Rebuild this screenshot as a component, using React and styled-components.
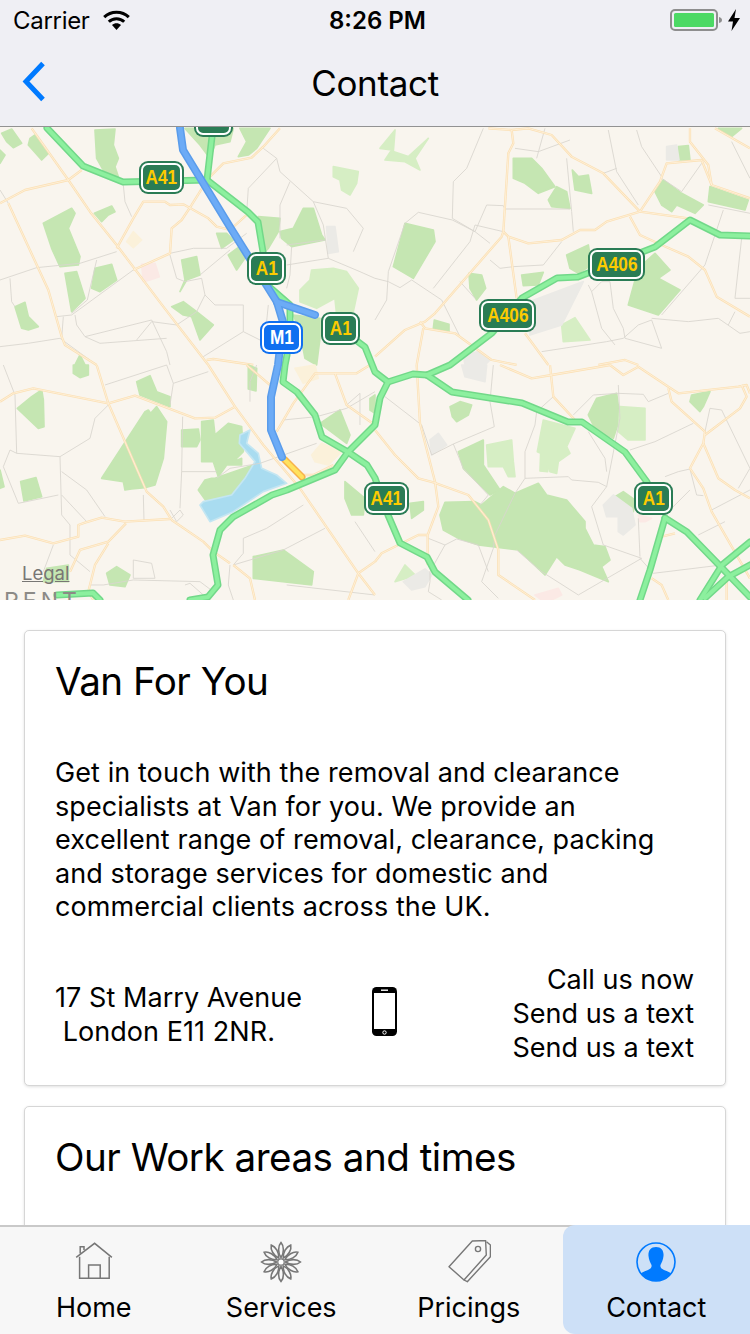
import React from 'react'
import styled, { createGlobalStyle } from 'styled-components'

// map data is written in the 3x coordinates of each quarter of the map
const QUARTERS = [
  {
    at: 'translate(0 125) scale(0.3333)',
    parks: [
      '285,15 345,12 340,60 355,100 345,125 355,155 310,135 290,100',
      '5,25 35,12 65,55 40,68 20,50',
      '90,40 105,30 145,85 125,105 85,60',
      '0,75 15,90 0,115',
      '130,295 215,250 225,265 205,310 240,395 235,420 180,425 155,370',
      '195,445 230,440 255,520 215,560',
      '275,490 285,430 335,418 350,465 300,500',
      '283,265 335,243 345,260 325,270 305,290',
      '45,545 75,532 85,575 115,605 85,615 65,610',
      '225,720 240,690 255,720',
      '545,405 590,395 600,450 560,465 540,500 555,465',
      '650,325 680,325 700,345 665,370',
      '685,390 725,360 745,385 710,435',
      '515,545 550,530 590,560 640,600 600,645 575,575 550,570',
      '555,10 700,10 690,50 645,60 630,100 600,60',
      '720,10 810,10 770,70 745,90 715,95 740,50',
      '775,275 840,280 835,320 805,370 790,385 775,330',
      '840,320 880,310 910,250 940,250 965,330 975,345 875,365 845,340',
      '880,570 960,580 960,640 950,720 915,700 900,620',
    ],
    light: [
      '1000,125 1075,140 1070,175 1050,210 1025,195 1020,165 1000,155',
      '900,495 930,465 935,435 1000,430 1040,440 1075,490 1060,560 1010,570 1005,520 950,550 900,530',
    ],
    grey: ['980,305 1005,305 1015,380 985,385'],
    pink: ['425,418 465,415 478,455 450,465 430,470'],
    beige: ['380,350 400,320 425,345 400,368'],
    lines: [
      '370,180 375,230 395,275',
      '0,465 110,428 240,415 350,380',
      '30,460 35,530 45,545',
      '0,195 25,235',
      '740,265 745,190 830,100 790,70',
      '830,100 840,140 940,230 1040,250 1090,310 1060,380',
      '870,170 840,240 840,340',
      '940,230 970,300 985,400 1080,440 1125,460',
      '860,360 975,345',
      '875,365 870,450 860,490',
      '860,420 985,400',
      '170,575 215,570 400,435 510,385 580,370 680,370 740,325',
      '510,390 530,460 555,470 605,460 615,510 590,560 530,600 455,590 410,645',
      '190,575 185,640',
      '225,570 230,600 255,635 455,585 500,680 510,720',
      '615,510 645,540 730,540 730,620',
      '730,620 610,695',
      '730,620 810,660',
      '805,540 800,590',
      '0,665 85,655 180,640 290,720',
      '300,655 500,640',
      '255,635 300,655',
      '290,405 270,490 262,525 215,565',
      '690,375 600,450',
    ],
    roads: [
      '95,10 205,165 270,260 350,360 490,545 625,720',
      '0,235 75,195 205,165 245,135',
      '25,235 145,495 185,635 195,660 290,720',
      '625,160 670,115 755,98 790,65 840,10',
      '625,160 575,240 545,285 515,310 510,385 400,435',
      '350,370 400,280 430,230 495,230 510,240 550,238 625,280 650,305 690,315 745,265',
      '620,705 640,702 760,720',
    ],
  },
  {
    at: 'translate(375 125) scale(0.3333)',
    parks: [
      '415,100 470,100 500,130 540,185 490,205 450,175 415,160',
      '520,225 545,185 575,200 585,250 530,245',
      '592,135 610,155 640,150 650,205 600,195',
      '90,295 175,315 180,350 115,460 55,425',
      '282,445 320,450 332,490 305,525 285,490',
      '440,450 505,442 490,480 445,482',
      '575,390 640,360 650,420 610,445 585,430',
      '790,430 840,385 885,435 850,460 915,495 850,570 760,540',
      '840,200 865,165 920,205 985,240 960,265 905,240 890,260 860,240',
      '1005,185 1120,225 1110,255 1000,230',
      '178,585 222,598 222,620 175,610',
      '1030,10 1100,10 1070,35',
      '910,65 940,62 945,105 912,105',
    ],
    light: [
      '15,70 60,15 55,80 100,95 160,40 120,100 135,135 90,110 30,105 50,75',
      '560,600 600,578 645,645 565,650',
    ],
    grey: [
      '465,530 625,470 560,600 465,630',
      '875,65 905,60 912,105 875,105',
      '265,690 310,680 345,705 330,720 270,720',
    ],
    pink: [],
    beige: [],
    lines: [
      '325,10 275,130 235,170 232,280 300,320',
      '130,262 232,285 300,320 345,355',
      '130,262 90,295 40,440 35,525 0,585',
      '0,460 40,470 75,488 110,465 200,525 255,635',
      '300,300 385,320',
      '300,300 285,350 175,490',
      '335,240 385,242 390,252 585,252',
      '335,240 300,320',
      '345,405 375,430 415,425 505,420 560,350',
      '510,10 485,100',
      '420,70 490,80 585,45',
      '575,100 590,260 595,320',
      '640,480 650,500 680,470 705,470 715,550 745,610 750,640 860,670 830,585 790,600 745,640 695,650 500,680',
      '650,500 680,610 720,660',
      '700,15 725,140 790,240',
      '685,145 725,130',
      '785,15 800,65 860,155',
      '860,160 920,200 980,115',
      '1045,255 990,420 860,570',
      '830,580 940,590 1030,580 1095,625 1125,620',
      '1000,240 1125,265',
      '1100,340 1080,520 1125,520',
      '1080,560 1060,600',
      '1070,50 1125,160',
      '255,470 300,520',
    ],
    roads: [
      '340,10 410,15 460,10 530,30 590,95 685,145 795,260 855,170 875,115 980,105 1010,180 1125,220',
      '410,15 415,55 400,85 385,320 380,335 180,565 150,590 90,615 0,695',
      '385,320 400,335 460,355 560,345 615,315 660,315 695,290 795,260 940,280',
      '400,335 425,520',
      '945,10 945,50 1000,120 1010,180',
      '1020,10 1125,70',
      '765,275 795,330 860,360 940,395 990,435 1025,515 1125,575',
      '135,590 150,610 240,625 350,705 425,720',
      '145,610 125,720',
      '450,625 520,720',
      '670,720 750,705 790,720',
    ],
  },
  {
    at: 'translate(0 365) scale(0.3333)',
    parks: [
      '220,0 265,0 265,30 240,38 220,25',
      '410,50 450,32 470,80 510,95 510,125 420,90',
      '52,130 95,95 125,75 130,105 132,185 115,190',
      '305,340 435,140 445,135 452,145 470,125 500,170 490,280 465,360 435,368 395,372 375,375 370,350',
      '62,350 108,338 125,395 72,408',
      '545,195 595,192 600,225 590,245 545,245',
      '605,170 640,165 645,210 685,175 725,185 730,260 700,290 725,280 725,300 680,300 655,335 640,290 605,290',
      '595,375 615,345 635,340 645,340 760,300 720,355 690,395 620,410',
      '760,575 850,555 940,620 935,660 760,640',
      '745,0 770,10 768,78 745,72',
      '0,315 12,365 0,370',
      '1035,350 1095,400 1090,450 1055,450 1035,400',
      '960,175 1020,135 1050,210 1040,235',
      '1110,100 1125,90 1125,145 1110,135',
      '320,625 350,605 390,630 375,665 330,660',
      '140,610 205,600 205,650 130,650',
    ],
    light: [],
    grey: [],
    pink: [],
    beige: [
      '885,10 945,0 955,40 910,55',
      '935,270 965,235 1025,260 985,300 945,290',
    ],
    water: [
      '600,420 630,470 700,440 790,380 860,355 830,330 785,310 775,265 740,235 750,195 720,210 718,235 765,290 735,340 695,390 610,410',
    ],
    lines: [
      '10,0 45,90 50,265 180,275 270,220 285,160 325,120',
      '315,60 500,0',
      '500,0 520,55 510,120',
      '520,55 625,20',
      '180,275 185,450 210,480 210,570 270,620',
      '30,255 10,305 55,415 175,390',
      '30,255 50,265',
      '185,320 260,375 315,455',
      '185,390 260,470',
      '548,155 545,320 540,430',
      '545,320 650,320',
      '430,390 432,465',
      '160,540 130,620',
      '650,340 690,310 780,295 950,235',
      '750,110 750,50 770,0',
      '850,165 950,155 1040,130 1125,80',
      '1040,120 1080,85 1080,180',
      '700,600 730,565 730,520 800,490 910,420',
      '700,600 850,555 975,490',
      '860,660 1125,690',
      '400,585 455,595 465,640 400,640 400,585',
      '270,660 310,660 400,645 600,650 640,680',
      '555,660 570,655 610,690',
      '690,600 685,660 700,705',
      '1065,470 1125,560',
      '510,435 530,470 550,450 540,435 510,465',
    ],
    roads: [
      '0,110 40,85 100,70 325,115 405,92 585,160 645,158 705,125',
      '290,0 325,115 440,380 490,425 515,465 610,530 640,560 690,595',
      '0,525 75,512 160,535 235,515 235,480 255,473 305,458 375,470 510,462',
      '378,475 325,530 240,555 210,620',
      '325,535 285,600 265,680 280,705',
      '625,0 705,125 790,240 900,370 1075,625 1125,690',
      '700,600 750,640 765,705',
      '1075,625 1125,590',
      '1075,625 1045,705',
      '830,200 880,115 945,25 1005,25 1070,25 1110,0',
      '1005,25 1040,120 1125,180',
      '740,0 810,60',
      '905,330 940,330 1000,300',
    ],
  },
  {
    at: 'translate(375 365) scale(0.3333)',
    parks: [
      '225,125 255,110 290,120 280,150 245,170 232,155',
      '250,260 325,225 325,300 375,375 345,390 265,310',
      '640,150 665,100 725,85 735,160 715,220 660,190',
      '195,450 210,412 300,410 320,420 385,365 420,385 490,355 515,390 575,405 630,470 630,490 655,540 690,545 705,585 680,605 700,650 615,615 570,600 545,575 510,630 430,555 310,540 250,520 205,495',
      '105,415 145,410 145,435 110,460',
      '720,395 745,380 780,405 775,440 745,435',
      '950,90 975,85 1005,80 985,125 975,140 945,110',
    ],
    light: [
      '335,240 410,225 415,290 420,335 400,335 385,305 340,305',
      '505,165 600,190 575,245 585,265 550,290 545,325 525,320 515,290 518,320 495,318 497,265 487,260',
      '735,125 810,130 810,225 760,225 730,200',
      '60,650 90,600 125,635 95,640',
    ],
    grey: [
      '165,225 190,205 215,240 170,270',
      '685,420 715,390 770,430 780,480 745,510 730,500 730,455 695,455',
      '85,650 150,612 170,630 150,665 110,675',
      '260,0 335,0 330,50 270,35',
    ],
    pink: [
      '790,450 830,460 810,470 795,470',
      '480,690 550,670 560,690 530,705 500,705',
    ],
    beige: [],
    lines: [
      '355,0 345,110 358,185 235,237 170,270 140,180 30,95',
      '535,95 485,140 480,180 450,260 450,340 420,385 360,510 355,550 320,650 370,700',
      '450,340 580,335 590,345 670,352 695,365',
      '695,320 690,280 640,200',
      '730,60 735,160 695,365 650,425 685,540 800,580',
      '655,90 730,85 805,88 820,110 880,85',
      '655,90 595,150',
      '765,255 840,230 955,175',
      '800,580 610,690 500,620 425,555',
      '235,237 265,310 340,390 315,420',
      '160,520 210,540 245,522 310,540 340,620',
      '210,540 165,620 165,650 160,680 200,705',
      '835,625 1040,600',
      '795,580 835,625',
      '1005,130 1040,135 1125,310 1090,370',
      '1005,130 990,200',
      '870,335 910,320 945,312 965,390 985,392',
      '945,375 870,450',
      '790,460 795,575',
      '1010,435 1125,375',
      '970,510 1050,470',
    ],
    roads: [
      '125,0 135,175 180,350 190,425 158,510 158,600',
      '0,195 60,270 130,340 175,352 280,390 340,465 370,555 370,630 480,705',
      '0,590 20,565 130,510 158,510',
      '375,0 470,40 530,30 705,0',
      '525,0 535,95 600,165',
      '705,0 745,30 790,5 880,65 910,85 1090,65 1115,60 1125,85',
      '880,70 890,110 990,200 985,235 945,310 985,370 1010,440 1125,640',
      '990,210 1095,130 1115,95 1100,60',
      '985,235 1030,340 1080,375 1125,400',
      '860,515 900,505',
      '830,640 860,660 880,705',
      '1055,650 1055,705',
    ],
  },
]

// these are in page pixels
const MOTORWAYS = [
  '47,128 83,166 123,182 207,180 213,128',
  '207,180 248,212 258,222 263,252 267,285 290,305 290,322 287,355 285,365 283,382 297,392 315,415 322,437 348,452 367,465 375,478 388,515 400,543 427,557 435,572 468,600',
  '348,452 375,425 380,398 388,382 413,374 427,375 452,392 522,403 568,422 582,422 625,452 647,482',
  '341,329 365,347 375,372 388,382',
  '427,375 450,365 492,333 522,298 557,278 578,277 655,247 690,220 720,235 750,236',
  '665,518 650,570 640,600',
  '665,518 687,532 722,568 750,597',
  '750,542 722,565 700,600',
  '750,565 728,577 705,598',
  '348,452 335,470 287,490 272,495 233,517 220,530 213,555 218,585 208,597 190,600',
  '57,595 93,593 100,600',
]

const ROUTE = [
  '180,128 183,150 230,227 277,302 283,322 278,365 271,397 271,430 282,457',
  '277,302 315,315',
]

const SHIELDS = [
  { label: '', x: 194, y: 104, w: 39 },
  { label: 'A41', x: 139, y: 161, w: 45 },
  { label: 'A1', x: 247, y: 252, w: 39 },
  { label: 'M1', x: 260, y: 321, w: 43, motorway: true },
  { label: 'A1', x: 321, y: 312, w: 39 },
  { label: 'A406', x: 588, y: 248, w: 57 },
  { label: 'A406', x: 479, y: 299, w: 57 },
  { label: 'A41', x: 364, y: 482, w: 45 },
  { label: 'A1', x: 634, y: 482, w: 39 },
]

const Global = createGlobalStyle`
  html, body {
    margin: 0;
    padding: 0;
    background: #fff;
  }
  * {
    box-sizing: border-box;
  }
`

const Page = styled.div`
  width: 750px;
  height: 1334px;
  display: flex;
  flex-direction: column;
  overflow: hidden;
  font-family: Inter, 'Liberation Sans', sans-serif;
  color: #000;
`

const Header = styled.header`
  height: 127px;
  flex: none;
  display: flex;
  flex-direction: column;
  background: #efeff4;
  border-bottom: 1px solid #929292;
`

const StatusBar = styled.div`
  height: 40px;
  padding: 0 10px 0 13px;
  display: flex;
  align-items: center;
  justify-content: space-between;
  position: relative;
`

const StatusGroup = styled.div`
  display: flex;
  align-items: center;
  gap: ${p => p.$gap}px;
`

const Carrier = styled.span`
  font-size: 24px;
  letter-spacing: -0.3px;
`

const Clock = styled.span`
  position: absolute;
  left: 329px;
  font-size: 24px;
  font-weight: 600;
  letter-spacing: 0;
`

const NavBar = styled.div`
  flex: 1;
  position: relative;
  display: flex;
  align-items: center;
  justify-content: center;
  padding-bottom: 1px;
`

const BackButton = styled.svg`
  position: absolute;
  left: 21px;
  top: 21px;
  width: 25px;
  height: 41px;
`

const Title = styled.h1`
  margin: 0;
  font-size: 35px;
  font-weight: 400;
  letter-spacing: -0.35px;
`

const MapBox = styled.div`
  height: 473px;
  flex: none;
  position: relative;
  overflow: hidden;
  background: #f9f5ee;
`

const MapDrawing = styled.svg`
  display: block;
  width: 750px;
  height: 473px;
`

const Area = styled.polygon`
  fill: ${p => p.$fill};
  stroke: ${p => p.$edge || p.$fill};
  stroke-width: 5;
  stroke-linejoin: round;
`

const Boundary = styled.polyline`
  fill: none;
  stroke: #d9d5ce;
  stroke-width: 2.6;
  stroke-linejoin: round;
`

const RoadEdge = styled.polyline`
  fill: none;
  stroke: #fbe0b4;
  stroke-width: 7;
  stroke-linejoin: round;
`

const RoadCore = styled.polyline`
  fill: none;
  stroke: #fff3df;
  stroke-width: 2.4;
  stroke-linejoin: round;
`

const Stroke = styled.polyline`
  fill: none;
  stroke: ${p => p.$color};
  stroke-width: ${p => p.$width};
  stroke-linejoin: round;
  stroke-linecap: round;
`

const Shield = styled.div`
  position: absolute;
  left: ${p => p.$x}px;
  top: ${p => p.$y - 127}px;
  width: ${p => p.$w}px;
  height: 33px;
  display: flex;
  align-items: center;
  justify-content: center;
  border-radius: 9px;
  background: ${p => (p.$motorway ? '#0f6ff0' : '#2a7c55')};
  color: ${p => (p.$motorway ? '#fff' : '#fdcb00')};
  font-family: 'Liberation Sans', Arial, sans-serif;
  font-size: 20px;
  font-weight: 700;

  &::after {
    content: '';
    position: absolute;
    inset: 2px;
    border: 2px solid #fff;
    border-radius: 7px;
  }
`

const ShieldLabel = styled.span`
  display: block;
  transform: scaleX(0.86);
`

const Legal = styled.span`
  position: absolute;
  left: 22px;
  top: 435px;
  font-size: 18.5px;
  color: #787674;
  text-decoration: underline;
`

const PlaceName = styled.span`
  position: absolute;
  left: 4px;
  top: 460px;
  font-size: 23px;
  letter-spacing: 4px;
  color: #8c8a86;
`

const Content = styled.main`
  flex: 1;
  min-height: 0;
  overflow: hidden;
  padding: 30px 24px 0;
  display: flex;
  flex-direction: column;
  gap: 20px;
`

const Card = styled.section`
  flex: none;
  min-height: ${p => p.$minHeight || 0}px;
  padding: 26px 31px 20px 30px;
  background: #fff;
  border: 1px solid #d6d6d6;
  border-radius: 5px;
  box-shadow: 0 1px 3px rgba(0, 0, 0, 0.12);
`

const CardTitle = styled.h2`
  margin: 0;
  font-size: 38.6px;
  line-height: 48px;
  font-weight: 400;
  letter-spacing: -0.5px;
`

const Description = styled.p`
  margin: 51px 0 39px;
  font-size: 27px;
  line-height: 33.5px;
  letter-spacing: 0.08px;
`

const ContactRow = styled.div`
  display: grid;
  grid-template-columns: 316px 25px 1fr;
  align-items: center;
  font-size: 27px;
  line-height: 34px;
`

const Address = styled.div`
  white-space: pre;
  margin-top: 3px;
  letter-spacing: 0.06px;
`

const PhoneIcon = styled.svg`
  display: block;
  margin-bottom: 5px;
  margin-left: 1px;
`

const Actions = styled.div`
  text-align: right;
`

const TabBar = styled.nav`
  height: 109px;
  flex: none;
  display: grid;
  grid-template-columns: repeat(4, 1fr);
  background: #f7f7f7;
  border-top: 2px solid #c9c9c9;
`

const Tab = styled.div`
  display: flex;
  flex-direction: column;
  align-items: center;
  margin-top: ${p => (p.$active ? -2 : 0)}px;
  padding-top: ${p => (p.$active ? 2 : 0)}px;
  background: ${p => (p.$active ? '#cde0f7' : 'transparent')};
  border-radius: ${p => (p.$active ? '12px 0 0 12px' : 0)};
  font-size: 27px;
`

const TabIcon = styled.svg`
  width: 44px;
  height: 44px;
  margin-top: 13px;
  flex: none;
`

const TabLabel = styled.span`
  margin-top: 7px;
  line-height: 34px;
`

const TinyIcon = styled.svg`
  display: block;
  flex: none;
`

function MapLayer() {
  return (
    <MapDrawing viewBox="0 127 750 473">
      {QUARTERS.map(q => (
        <g key={q.at} transform={q.at}>
          {q.parks.map(p => <Area key={p} points={p} $fill="#c5e6b2" />)}
          {q.light.map(p => <Area key={p} points={p} $fill="#d6eec4" />)}
          {q.grey.map(p => <Area key={p} points={p} $fill="#ebeae6" />)}
          {q.pink.map(p => <Area key={p} points={p} $fill="#fbe9e5" />)}
          {q.beige.map(p => <Area key={p} points={p} $fill="#fbf1da" />)}
          {(q.water || []).map(p => <Area key={p} points={p} $fill="#a9dcf0" $edge="#c4e6f2" />)}
          {q.lines.map(p => <Boundary key={p} points={p} />)}
          {q.roads.map(p => <RoadEdge key={p} points={p} />)}
          {q.roads.map(p => <RoadCore key={p} points={p} />)}
        </g>
      ))}
      <Stroke points="285,460 302,477" $color="#f7b24a" $width={7} />
      <Stroke points="285,460 302,477" $color="#ffe25e" $width={4} />
      {MOTORWAYS.map(p => <Stroke key={p} points={p} $color="#72d889" $width={7} />)}
      {MOTORWAYS.map(p => <Stroke key={p} points={p} $color="#8cf09e" $width={4} />)}
      {ROUTE.map(p => <Stroke key={p} points={p} $color="#5a9ceb" $width={8} />)}
      {ROUTE.map(p => <Stroke key={p} points={p} $color="#6cabf6" $width={5} />)}
    </MapDrawing>
  )
}

function Flower() {
  const angles = Array.from({ length: 12 }, (_, i) => i * 30)
  return (
    <TabIcon viewBox="0 0 44 44">
      {angles.map(a => (
        <path
          key={a}
          transform={`rotate(${a} 22 22)`}
          d="M22 17.5 C18.8 13 18.8 6 22 2.5 C25.2 6 25.2 13 22 17.5 Z"
          fill="#f7f7f7"
          stroke="#777"
          strokeWidth="1.6"
        />
      ))}
      <circle cx="22" cy="22" r="3.2" fill="#fff" stroke="#777" strokeWidth="1.2" />
    </TabIcon>
  )
}

export default function App() {
  return (
    <Page>
      <Global />
      <Header>
        <StatusBar>
          <StatusGroup $gap={12}>
            <Carrier>Carrier</Carrier>
            <TinyIcon width="29" height="20" viewBox="0 0 29 20">
              <path d="M14.5 20 L10 15 C12.5 12.6 16.5 12.6 19 15 Z" fill="#000" />
              <path d="M6.8 11.8 C11 7.6 18 7.6 22.2 11.8" fill="none" stroke="#000" strokeWidth="3" />
              <path d="M2.2 7.2 C9 0.6 20 0.6 26.8 7.2" fill="none" stroke="#000" strokeWidth="3" />
            </TinyIcon>
          </StatusGroup>
          <Clock>8:26 PM</Clock>
          <StatusGroup $gap={5}>
            <TinyIcon width="53" height="22" viewBox="0 0 53 22">
              <rect x="1" y="1" width="46" height="20" rx="4" fill="none" stroke="#8e8e8e" strokeWidth="2" />
              <rect x="4" y="4" width="40" height="14" rx="1.5" fill="#4cd964" />
              <path d="M49 8 C51 8.5 52 9.5 52 11 C52 12.5 51 13.5 49 14 Z" fill="#8e8e8e" />
            </TinyIcon>
            <TinyIcon width="12" height="22" viewBox="0 0 12 22">
              <path d="M8 0 L0 12.5 H5 L3.5 22 L12 9 H6.5 Z" fill="#000" />
            </TinyIcon>
          </StatusGroup>
        </StatusBar>
        <NavBar>
          <BackButton viewBox="0 0 25 41">
            <path d="M22 2.5 L5 20.5 L22 38.5" fill="none" stroke="#007aff" strokeWidth="5" />
          </BackButton>
          <Title>Contact</Title>
        </NavBar>
      </Header>

      <MapBox>
        <MapLayer />
        {SHIELDS.map(s => (
          <Shield key={s.label + s.x} $x={s.x} $y={s.y} $w={s.w} $motorway={s.motorway}>
            {s.label && <ShieldLabel>{s.label}</ShieldLabel>}
          </Shield>
        ))}
        <Legal>Legal</Legal>
        <PlaceName>RENT</PlaceName>
      </MapBox>

      <Content>
        <Card>
          <CardTitle>Van For You</CardTitle>
          <Description>
            Get in touch with the removal and clearance<br />
            specialists at Van for you. We provide an<br />
            excellent range of removal, clearance, packing<br />
            and storage services for domestic and<br />
            commercial clients across the UK.
          </Description>
          <ContactRow>
            <Address>{'17 St Marry Avenue\n London E11 2NR.'}</Address>
            <PhoneIcon width="25" height="49" viewBox="0 0 25 49">
              <rect x="0" y="0" width="25" height="49" rx="4.5" fill="#000" />
              <rect x="2" y="6" width="21" height="36" fill="#fff" />
              <rect x="9" y="2.5" width="7" height="1.4" fill="#fff" />
              <circle cx="12.5" cy="45.5" r="1.7" fill="none" stroke="#fff" strokeWidth="1" />
            </PhoneIcon>
            <Actions>
              Call us now<br />
              Send us a text<br />
              Send us a text
            </Actions>
          </ContactRow>
        </Card>
        <Card $minHeight={200}>
          <CardTitle>Our Work areas and times</CardTitle>
        </Card>
      </Content>

      <TabBar>
        <Tab>
          <TabIcon viewBox="0 0 44 44">
            <g fill="none" stroke="#777" strokeWidth="1.5">
              <path d="M4.2 17.3 L22.6 3.3 L39.9 17.3" />
              <path d="M8.2 13.5 V6.7 H12 V10" />
              <path d="M7.6 16.7 V38.3 H37.2 V16.7" />
              <path d="M16.6 38.3 V25 H28.2 V38.3" />
            </g>
          </TabIcon>
          <TabLabel>Home</TabLabel>
        </Tab>
        <Tab>
          <Flower />
          <TabLabel>Services</TabLabel>
        </Tab>
        <Tab>
          <TabIcon viewBox="0 0 44 44">
            <g fill="none" stroke="#777" strokeWidth="1.4" strokeLinejoin="round">
              <path d="M2 26.7 L25.3 1 L38.6 0.5 L39.3 15 L17 40 Z" />
              <path d="M39.5 1.7 L43.4 5 V16.7 L20.3 41.7 L17 40" />
              <circle cx="31" cy="9" r="2.6" />
            </g>
          </TabIcon>
          <TabLabel>Pricings</TabLabel>
        </Tab>
        <Tab $active>
          <TabIcon viewBox="0 0 44 44">
            <defs>
              <clipPath id="contact-disc">
                <circle cx="22" cy="22" r="19" />
              </clipPath>
            </defs>
            <circle cx="22" cy="22" r="19" fill="none" stroke="#007aff" strokeWidth="1.6" />
            <g clipPath="url(#contact-disc)" fill="#007aff">
              <path d="M22 7 C27.5 7 30 11 29.5 16 C29.2 20 27.5 23 26.5 25 C26 27 27 28.5 30 30 C34 31.5 38 33 41 36 V44 H3 V36 C6 33 10 31.5 14 30 C17 28.5 18 27 17.5 25 C16.5 23 14.8 20 14.5 16 C14 11 16.5 7 22 7 Z" />
            </g>
          </TabIcon>
          <TabLabel>Contact</TabLabel>
        </Tab>
      </TabBar>
    </Page>
  )
}
